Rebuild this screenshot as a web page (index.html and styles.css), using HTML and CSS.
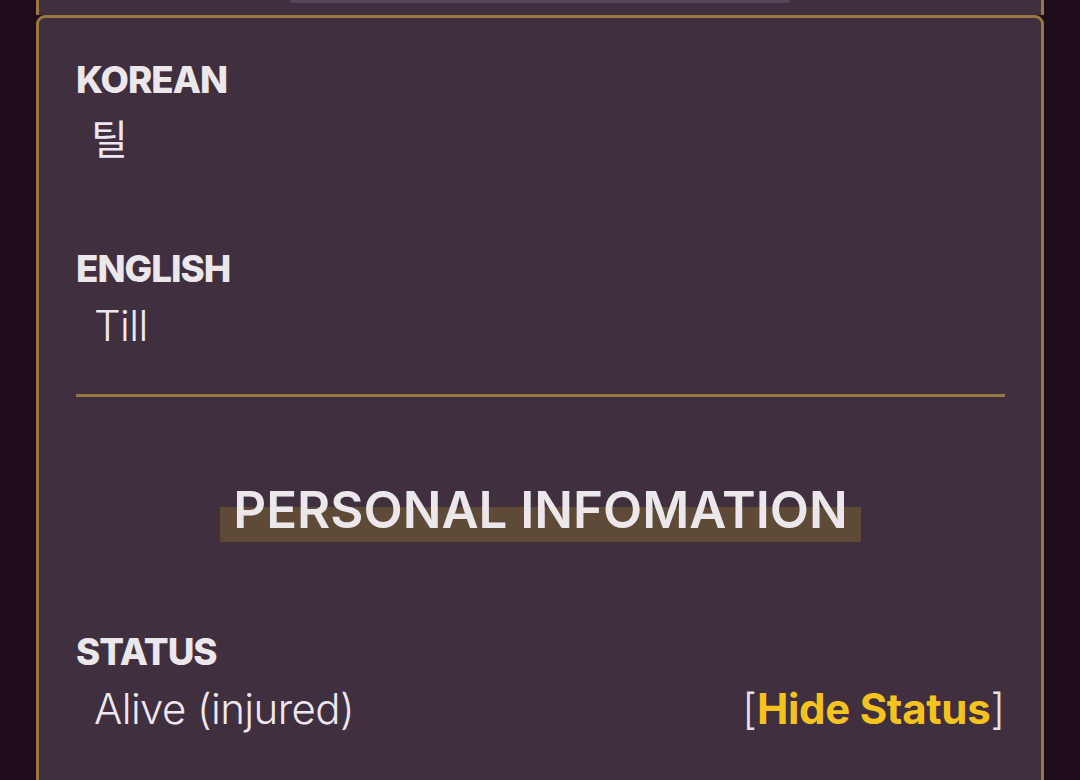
FILE: index.html
```html
<!DOCTYPE html>
<html lang="en">
<head>
<meta charset="utf-8">
<title>Till</title>
<link rel="stylesheet" href="styles.css">
</head>
<body>
<div class="page">
  <div class="prev"><div class="pill"></div></div>
  <section class="card">
    <div class="field">
      <h3 class="label">KOREAN</h3>
      <div class="value value-ko" lang="ko">틸</div>
    </div>
    <div class="field">
      <h3 class="label">ENGLISH</h3>
      <div class="value">Till</div>
    </div>
    <hr class="divider">
    <h2 class="heading"><span class="mark">PERSONAL INFOMATION</span></h2>
    <div class="field">
      <h3 class="label">STATUS</h3>
      <div class="status-row">
        <span class="value">Alive (injured)</span>
        <span class="toggle">[<a class="toggle-link" href="#">Hide Status</a>]</span>
      </div>
    </div>
  </section>
</div>
</body>
</html>
```

FILE: styles.css
```css
html, body {
  margin: 0;
  padding: 0;
  background: #1e0c1b;
  height: 100%;
  overflow: hidden;
}

body {
  font-family: "Inter", "Noto Sans", "Noto Sans CJK KR", sans-serif;
  color: #ebe6eb;
}

.page {
  margin: 0 36px;
}

.prev {
  height: 15px;
  background: #3f2f3f;
  border-left: 3px solid #967840;
  border-right: 3px solid #967840;
}

.pill {
  width: 500px;
  height: 3px;
  margin: 0 auto;
  background: #534658;
  border-radius: 0 0 8px 8px;
}

.card {
  background: #3f2f3f;
  border: 3px solid #967840;
  border-radius: 9px;
  padding: 40px 36px 80px 37px;
}

.field {
  margin: 0;
}

.field + .field {
  margin-top: 75px;
}

.label {
  margin: 0;
  font-size: 36.75px;
  line-height: 44px;
  font-weight: 800;
  letter-spacing: -1px;
  color: #ebe7eb;
}

.value {
  display: block;
  margin-left: 18px;
  font-size: 42px;
  line-height: 70px;
  font-weight: 300;
  letter-spacing: -0.6px;
  color: #efe7ef;
}

.value-ko {
  margin-left: 15px;
  font-family: "Noto Sans CJK KR", sans-serif;
  font-weight: 400;
  font-size: 40px;
}

.divider {
  margin: 33px 0 0;
  height: 3px;
  border: 0;
  background: #967840;
}

.heading {
  margin: 80px 0 0;
  text-align: center;
  font-size: 51px;
  line-height: 65px;
  font-weight: 600;
  letter-spacing: 0;
  color: #ebe7eb;
}

.mark {
  display: inline-block;
  padding: 0 13px;
  background: linear-gradient(to bottom, transparent 46%, #5e4a36 46%);
}

.heading + .field {
  margin-top: 88px;
}

.status-row {
  display: flex;
  justify-content: space-between;
  align-items: baseline;
}

.toggle {
  font-size: 42px;
  line-height: 70px;
  font-weight: 300;
  color: #e6e0e8;
}

.toggle-link {
  color: #f5c31e;
  font-weight: 700;
  letter-spacing: -0.3px;
  text-decoration: none;
}
```
